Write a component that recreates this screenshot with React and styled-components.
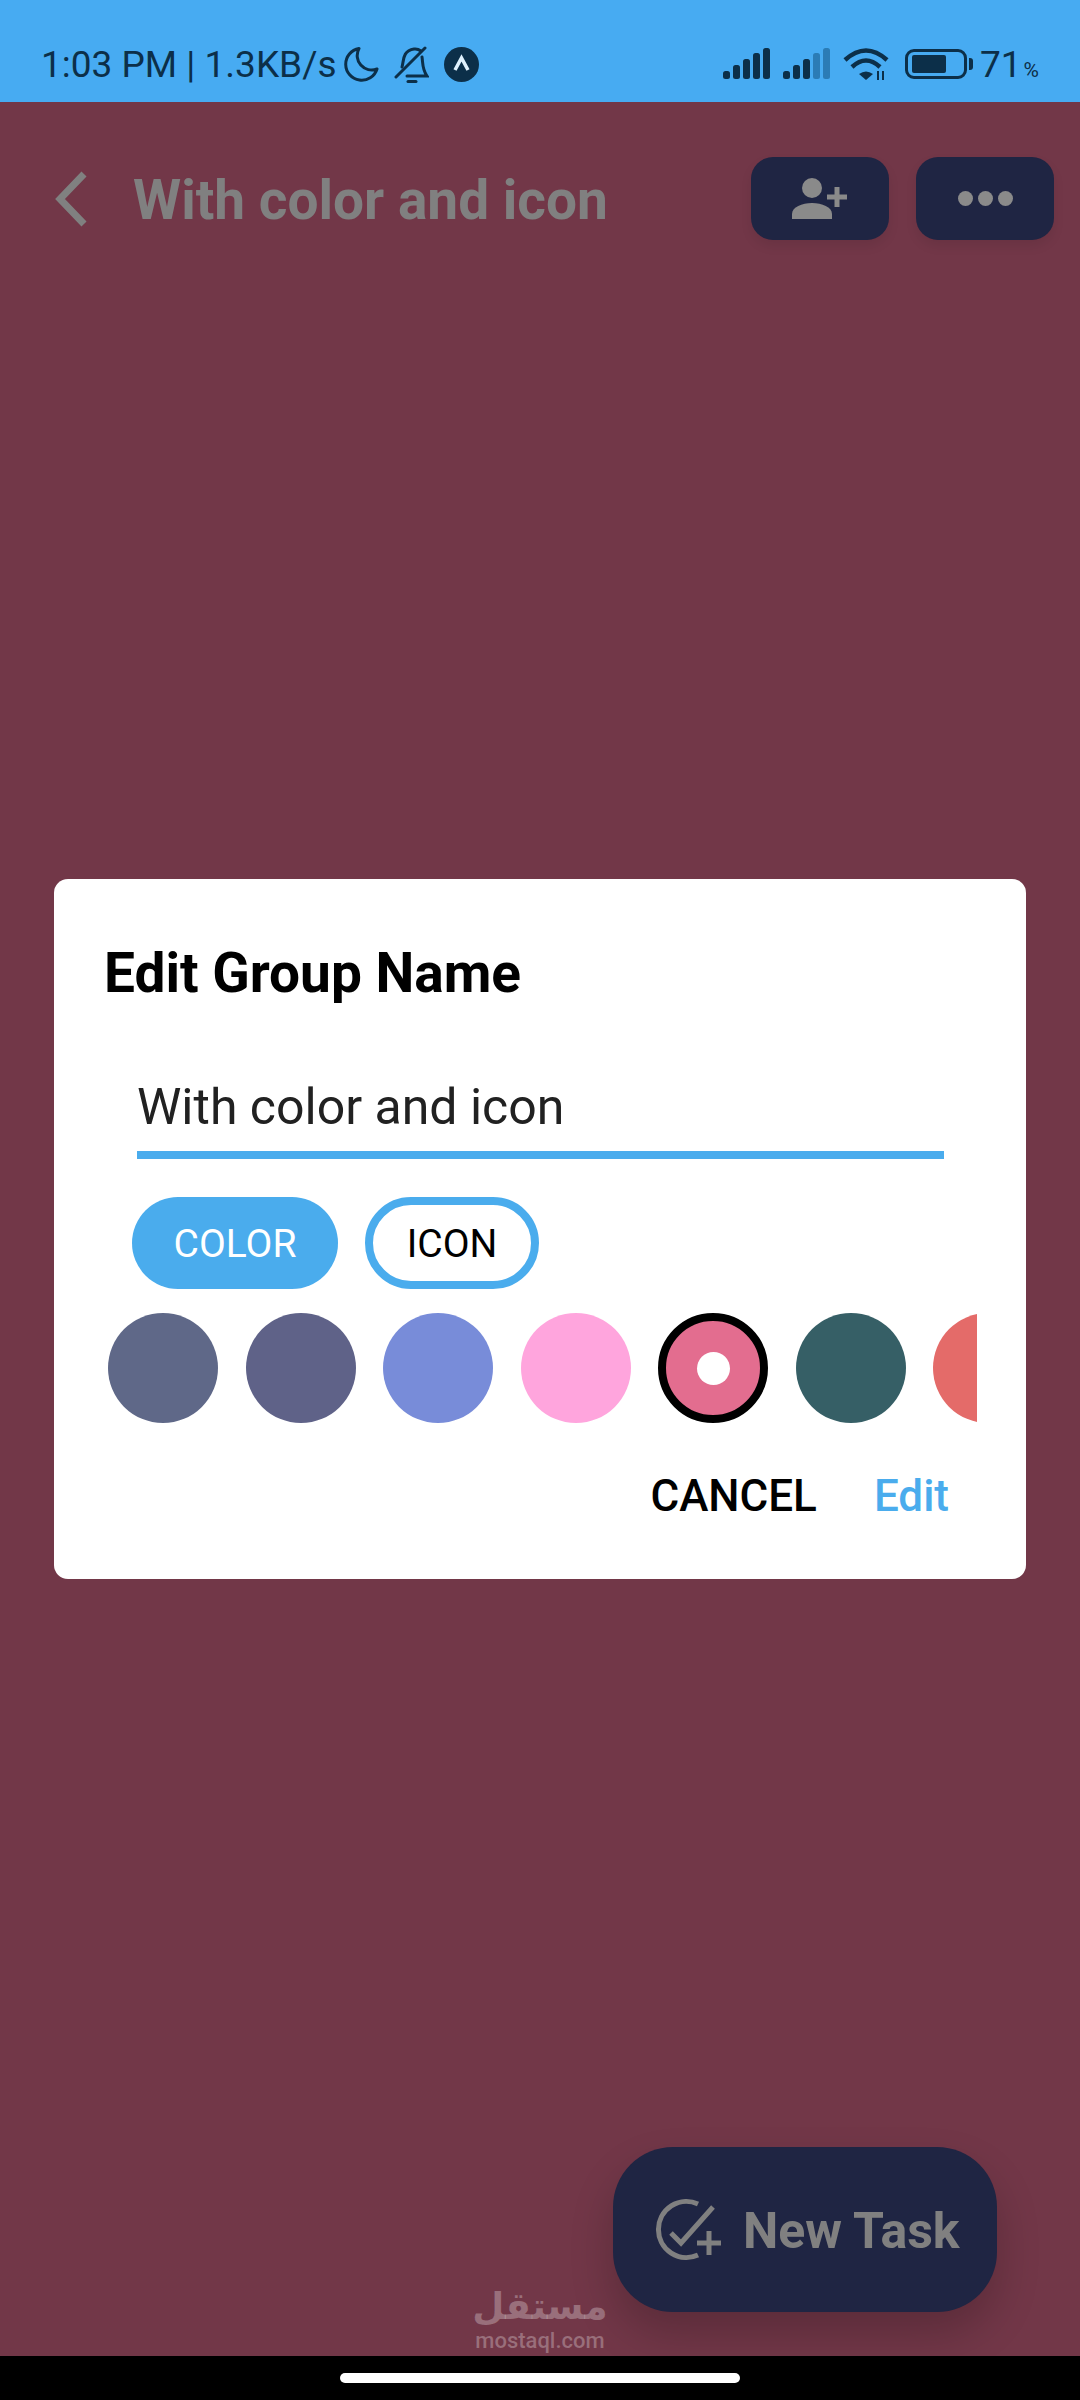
import styled, { createGlobalStyle } from "styled-components";

const GlobalStyle = createGlobalStyle`
  html, body {
    margin: 0;
    padding: 0;
    background: #000;
  }
  * {
    box-sizing: border-box;
  }
`;

const swatches = [
  { color: "#5f6888" },
  { color: "#5f6288" },
  { color: "#788cd9" },
  { color: "#ffa5dd" },
  { color: "#e36d8f", selected: true },
  { color: "#365f66" },
  { color: "#e46b69" },
];

function SignalBars({ faded }) {
  const heights = [8, 14, 20, 26, 31];
  return (
    <svg width="47" height="32" viewBox="0 0 47 32">
      {heights.map((h, i) => (
        <rect
          key={i}
          x={i * 10}
          y={31 - h}
          width="7"
          height={h}
          rx="2.5"
          fill={faded && i > 2 ? "#2b7cb6" : "#0c2f49"}
        />
      ))}
    </svg>
  );
}

function App() {
  return (
    <Page>
      <GlobalStyle />
      <StatusBar>
        <StatusLeft>
          <StatusText>1:03 PM | 1.3KB/s</StatusText>
          <svg width="35" height="36" viewBox="0 0 35 36" fill="none">
            <path
              d="M15 2.500A16 16 0 1 0 33 23A14.500 14.500 0 0 1 15 2.500Z"
              stroke="#0c2f49"
              strokeWidth="3"
              strokeLinejoin="round"
            />
          </svg>
          <svg width="35" height="37" viewBox="0 0 35 37" fill="none" stroke="#0c2f49" strokeWidth="3" strokeLinecap="round">
            <path d="M8 21C10 15 8 5 20 3C23 2.500 25 3.500 27 5" />
            <path d="M28 11C29 17 28 23 33 30H13" />
            <path d="M2 31L31 2" />
            <path d="M14 35.500H22" />
          </svg>
          <svg width="35" height="35" viewBox="0 0 35 35">
            <circle cx="17.500" cy="17.500" r="17.500" fill="#0c2f49" />
            <path d="M11 23L17.500 11L24 23" fill="none" stroke="#dff1fd" strokeWidth="3.500" />
          </svg>
        </StatusLeft>
        <StatusRight>
          <SignalBars />
          <SignalBars faded />
          <svg width="46" height="34" viewBox="0 0 46 34" fill="none" stroke="#0c2f49" strokeWidth="4.500">
            <path d="M2 13Q23 -6 44 13" />
            <path d="M9 20Q23 7 37 20" />
            <path d="M23 33L16 27Q23 22 30 27Z" fill="#0c2f49" stroke="none" />
            <path d="M35 24V33M40 24V33" strokeWidth="2" />
          </svg>
          <Battery>
            <BatteryFill />
          </Battery>
          <BatteryText>
            71<small>%</small>
          </BatteryText>
        </StatusRight>
      </StatusBar>

      <Screen>
        <Header>
          <svg width="32" height="56" viewBox="0 0 32 56" fill="none">
            <path d="M29 3L5 28L29 53" stroke="#808080" strokeWidth="7" />
          </svg>
          <Title>With color and icon</Title>
          <HeaderButton>
            <svg width="56" height="42" viewBox="0 0 56 42" fill="#8a8a8a">
              <circle cx="20" cy="10" r="10" />
              <path d="M0 41V36C0 29 10 25 20 25C30 25 40 29 40 36V41Z" />
              <path d="M45 9V29M35 19H55" stroke="#8a8a8a" strokeWidth="5" />
            </svg>
          </HeaderButton>
          <HeaderButton>
            <svg width="55" height="15" viewBox="0 0 55 15" fill="#8a8a8a">
              <circle cx="7.500" cy="7.500" r="7.500" />
              <circle cx="27.500" cy="7.500" r="7.500" />
              <circle cx="47.500" cy="7.500" r="7.500" />
            </svg>
          </HeaderButton>
        </Header>

        <Overlay>
          <Dialog>
            <DialogTitle>Edit Group Name</DialogTitle>
            <NameField>With color and icon</NameField>
            <Chips>
              <Chip $active>COLOR</Chip>
              <Chip>ICON</Chip>
            </Chips>
            <SwatchRow>
              {swatches.map((s) => (
                <Swatch key={s.color} $color={s.color} $selected={s.selected}>
                  {s.selected && <SwatchDot />}
                </Swatch>
              ))}
            </SwatchRow>
            <Actions>
              <ActionButton>CANCEL</ActionButton>
              <ActionButton $primary>Edit</ActionButton>
            </Actions>
          </Dialog>
        </Overlay>

        <NewTask>
          <svg width="68" height="64" viewBox="0 0 68 64" fill="none" stroke="#808080" strokeWidth="5">
            <path d="M43 6A28 28 0 1 0 43 57" />
            <path d="M16 35L26 45L58 9" />
            <path d="M54 33V57M42 45H66" />
          </svg>
          <NewTaskLabel>New Task</NewTaskLabel>
        </NewTask>

        <Watermark>
          <WatermarkArabic>مستقل</WatermarkArabic>
          <WatermarkLatin>mostaql.com</WatermarkLatin>
        </Watermark>
      </Screen>

      <NavBar>
        <HomePill />
      </NavBar>
    </Page>
  );
}

const Page = styled.div`
  width: 1080px;
  height: 2400px;
  display: flex;
  flex-direction: column;
  overflow: hidden;
  font-family: Roboto, "Liberation Sans", sans-serif;
`;

const StatusBar = styled.div`
  height: 102px;
  flex-shrink: 0;
  padding: 26px 41px 0 41px;
  background: #47abf2;
  display: flex;
  align-items: center;
  justify-content: space-between;
  color: #0c2f49;
`;

const StatusLeft = styled.div`
  display: flex;
  align-items: center;
  gap: 15px;
`;

const StatusText = styled.span`
  font-size: 37px;
  margin-right: -8px;
  white-space: nowrap;
`;

const StatusRight = styled.div`
  display: flex;
  align-items: center;
  gap: 13px;
`;

const Battery = styled.div`
  position: relative;
  width: 62px;
  height: 30px;
  margin-left: 3px;
  margin-right: 0;
  padding: 3px 4px;
  border: 3px solid #0c2f49;
  border-radius: 9px;

  &::after {
    content: "";
    position: absolute;
    top: 6px;
    right: -9px;
    width: 4px;
    height: 12px;
    border-radius: 0 3px 3px 0;
    background: #0c2f49;
  }
`;

const BatteryFill = styled.div`
  width: 34px;
  height: 100%;
  border-radius: 2px;
  background: #0c2f49;
`;

const BatteryText = styled.span`
  font-size: 37px;
  white-space: nowrap;

  small {
    font-size: 21px;
    margin-left: 2px;
  }
`;

const Screen = styled.div`
  position: relative;
  flex: 1;
  background: #723748;
`;

const Header = styled.div`
  display: flex;
  align-items: center;
  padding: 55px 26px 0 55px;
`;

const Title = styled.div`
  flex: 1;
  margin-left: 46px;
  padding-top: 2px;
  font-size: 55px;
  font-weight: 700;
  color: #808080;
  white-space: nowrap;
`;

const HeaderButton = styled.div`
  width: 138px;
  height: 83px;
  margin-left: 27px;
  display: flex;
  align-items: center;
  justify-content: center;
  border-radius: 22px;
  background: #1f2543;
  box-shadow: 0 6px 12px rgba(0, 0, 0, 0.08);
`;

const Overlay = styled.div`
  position: absolute;
  inset: 0;
  display: flex;
  align-items: center;
  justify-content: center;
`;

const Dialog = styled.div`
  width: 972px;
  height: 700px;
  padding-top: 64px;
  border-radius: 14px;
  background: #fff;
`;

const DialogTitle = styled.div`
  padding-left: 50px;
  font-size: 55px;
  line-height: 60px;
  font-weight: 700;
  color: #000;
`;

const NameField = styled.div`
  width: 807px;
  height: 82px;
  margin: 74px 0 0 83px;
  font-size: 50px;
  line-height: 60px;
  color: #212121;
  border-bottom: 8px solid #4aaced;
`;

const Chips = styled.div`
  display: flex;
  gap: 27px;
  margin: 38px 0 0 78px;
`;

const Chip = styled.div`
  height: 92px;
  width: ${(p) => (p.$active ? "206px" : "174px")};
  padding-top: 2px;
  display: flex;
  align-items: center;
  justify-content: center;
  border-radius: 46px;
  font-size: 39px;
  color: ${(p) => (p.$active ? "#fff" : "#000")};
  background: ${(p) => (p.$active ? "#4aaced" : "#fff")};
  border: ${(p) => (p.$active ? "none" : "8px solid #4aaced")};
`;

const SwatchRow = styled.div`
  width: 869px;
  margin: 24px 0 0 54px;
  display: flex;
  gap: 27.5px;
  overflow: hidden;
`;

const Swatch = styled.div`
  width: 110px;
  height: 110px;
  flex-shrink: 0;
  display: flex;
  align-items: center;
  justify-content: center;
  border-radius: 50%;
  background: ${(p) => p.$color};
  border: ${(p) => (p.$selected ? "8px solid #000" : "none")};
`;

const SwatchDot = styled.div`
  width: 33px;
  height: 33px;
  border-radius: 50%;
  background: #fff;
`;

const Actions = styled.div`
  display: flex;
  justify-content: flex-end;
  gap: 57px;
  margin-top: 43px;
  padding-right: 77px;
`;

const ActionButton = styled.div`
  font-size: 44px;
  line-height: 60px;
  font-weight: 500;
  color: ${(p) => (p.$primary ? "#4aaced" : "#000")};
`;

const NewTask = styled.div`
  position: absolute;
  right: 83px;
  bottom: 44px;
  width: 384px;
  height: 165px;
  padding-left: 42px;
  display: flex;
  align-items: center;
  gap: 20px;
  border-radius: 60px;
  background: #1f2543;
  box-shadow: 0 22px 44px rgba(0, 0, 0, 0.2);
`;

const NewTaskLabel = styled.span`
  padding-top: 2px;
  font-size: 50px;
  font-weight: 700;
  color: #808080;
  white-space: nowrap;
`;

const Watermark = styled.div`
  position: absolute;
  left: 460px;
  bottom: 2px;
  width: 160px;
  display: flex;
  flex-direction: column;
  align-items: center;
  color: rgba(255, 255, 255, 0.28);
`;

const WatermarkArabic = styled.div`
  font-family: "DejaVu Sans", sans-serif;
  font-size: 37px;
  line-height: 42px;
  font-weight: 700;
`;

const WatermarkLatin = styled.div`
  font-size: 22px;
  line-height: 26px;
  font-weight: 500;
`;

const NavBar = styled.div`
  height: 44px;
  flex-shrink: 0;
  padding-top: 17px;
  background: #000;
  display: flex;
  justify-content: center;
`;

const HomePill = styled.div`
  width: 400px;
  height: 10px;
  border-radius: 5px;
  background: #fff;
`;

export default App;
